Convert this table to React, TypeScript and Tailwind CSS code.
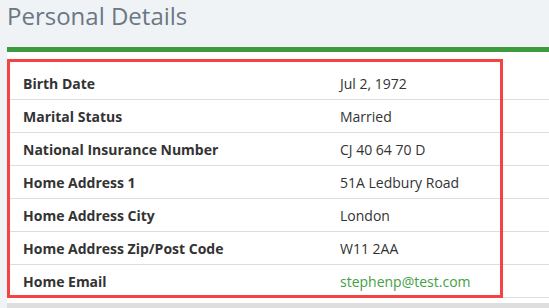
import React from 'react';

const rows: { label: string; value: string; link?: boolean }[] = [
  { label: 'Birth Date', value: 'Jul 2, 1972' },
  { label: 'Marital Status', value: 'Married' },
  { label: 'National Insurance Number', value: 'CJ 40 64 70 D' },
  { label: 'Home Address 1', value: '51A Ledbury Road' },
  { label: 'Home Address City', value: 'London' },
  { label: 'Home Address Zip/Post Code', value: 'W11 2AA' },
  { label: 'Home Email', value: 'stephenp@test.com', link: true },
];

export default function App() {
  return (
    <div className="w-[549px] h-[308px] overflow-hidden bg-[#eff3f5] font-['Open_Sans',sans-serif]">
      <h2 className="h-[47px] pl-[7px] text-[24px] leading-[32px] font-normal text-[#6b7785]">
        Personal Details
      </h2>

      <div className="ml-[7px] bg-white border-t-[5px] border-[#3d9a3d] pt-[15px] pb-[5px]">
        <div className="relative">
          {rows.map(r => (
            <div key={r.label} className="flex h-[33px] items-center border-b border-[#dddddd] text-[14px]">
              <span className="w-[333px] shrink-0 pl-[16px] font-bold text-[#333333]">{r.label}</span>
              <span className={r.link ? 'text-[#43a047]' : 'text-[#333333]'}>{r.value}</span>
            </div>
          ))}
          <div className="absolute left-0 top-[-8px] w-[496px] h-[239px] border-[3px] border-[#f44343] pointer-events-none" />
        </div>
      </div>
      <div className="ml-[7px] h-[5px] bg-[#dedede]" />
    </div>
  );
}
